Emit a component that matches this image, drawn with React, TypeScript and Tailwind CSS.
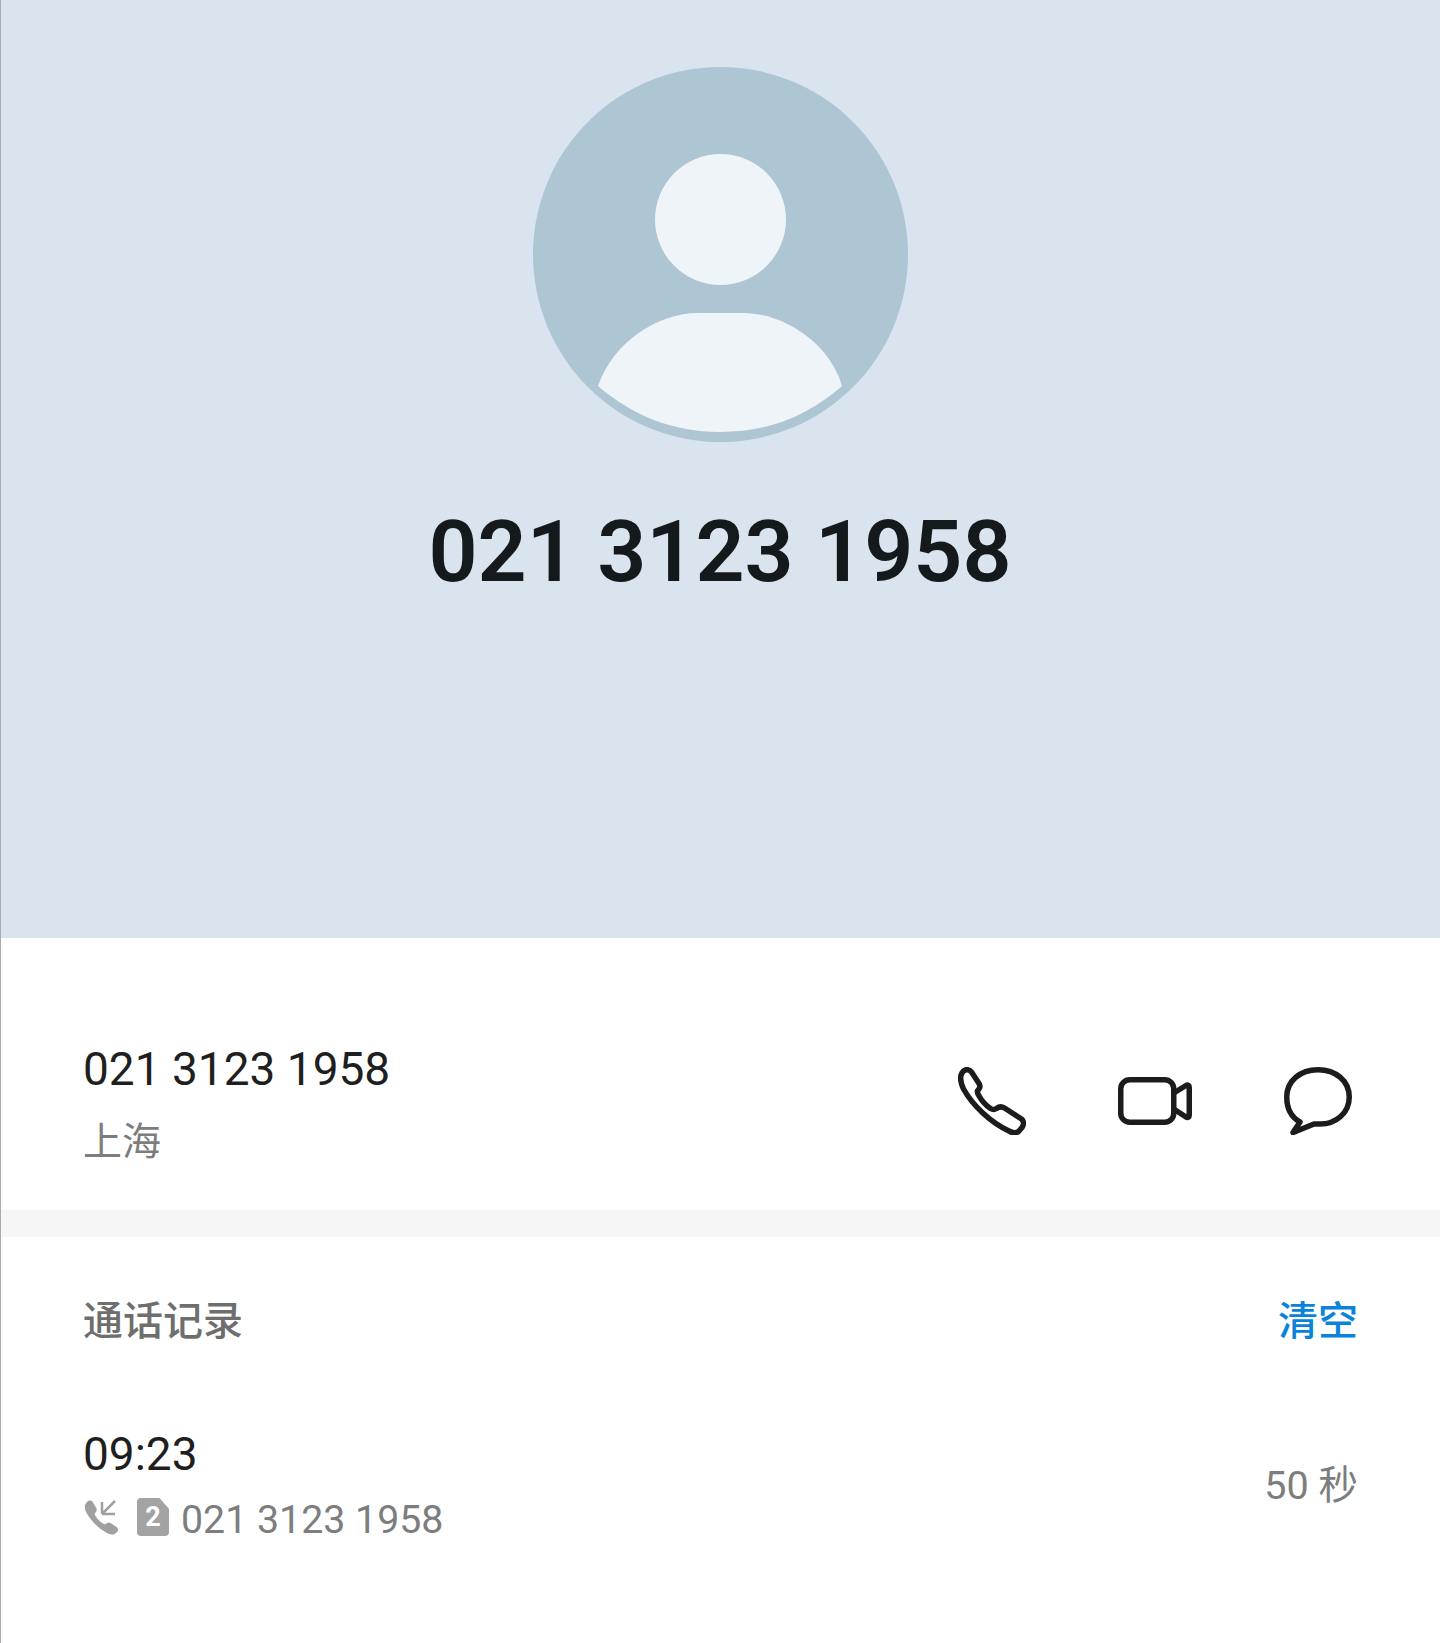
function PhoneIcon() {
  return (
    <svg viewBox="0 0 68 68" className="h-[68px] w-[68px] shrink-0" fill="none" stroke="#1c1c1c" strokeWidth="5.500" strokeLinejoin="round">
      <path d="M4 6C6.500 1.500 11 2 13.500 5L21 16.500C22.500 19 22 21 20.500 22.500C19 24 19 25.500 20.500 28C23.500 33.500 28 38.500 32.500 41.500C35 43 37 42.500 38.500 41.500C41 39.500 44 39.500 46.500 41L63.500 52C66 54 66 57.500 64 60.500L61 64C58.500 66.500 54.500 66 51 64C33 55.500 15 39 5.500 22C2.500 15.500 1.500 10 4 6Z" />
    </svg>
  );
}

function VideoIcon() {
  return (
    <svg viewBox="0 0 74 48" className="h-[48px] w-[74px] shrink-0" fill="none" stroke="#1c1c1c" strokeWidth="5.500" strokeLinejoin="round">
      <rect x="2.750" y="2.750" width="53" height="42.500" rx="9" />
      <path d="M55.750 16L68 8.500C70 7.500 71.250 8.500 71.250 10.500V38C71.250 40 70 41 68 40L55.750 32" />
    </svg>
  );
}

function ChatIcon() {
  return (
    <svg viewBox="0 0 68 68" className="h-[68px] w-[68px] shrink-0" fill="none" stroke="#1c1c1c" strokeWidth="5.500" strokeLinejoin="round">
      <path d="M34 2.750C52 2.750 65.250 14 65.250 30C65.250 46 52 57 36 57H30L9 65.500L16 55C7 50 2.750 41 2.750 30C2.750 14 16 2.750 34 2.750Z" />
    </svg>
  );
}

function IncomingIcon() {
  return (
    <svg viewBox="0 0 36 36" className="h-[36px] w-[36px] shrink-0" fill="#a0a0a0">
      <path d="M4 3C6 1 9 1 10 3.500L13.500 9.500C14 11 13.500 12.500 12.500 13.500C11.500 14.500 11.500 15.500 12.500 17C14.500 20 17 22.500 20 24.500C21.500 25.500 22.500 25.500 23.500 24.500C24.500 23.500 26 23 27.500 24L33.500 28C35.500 29.500 35.500 32 33.500 33.500L31.500 35C29.500 36 27 35.500 24 34C15 29 8 22 3 13C1 9 1.500 5.500 4 3Z" />
      <path d="M19 15V3M19 15H32M19 15L32 2" fill="none" stroke="#a0a0a0" strokeWidth="2.500" />
    </svg>
  );
}

function SimBadge() {
  return (
    <div className="flex h-[38px] w-[32px] shrink-0 items-center justify-center rounded-[4px] bg-[#a3a3a3] text-[27px] leading-none font-bold text-white [clip-path:polygon(0_0,70%_0,100%_28%,100%_100%,0_100%)]">
      2
    </div>
  );
}

export default function App() {
  return (
    <div className="h-[1643px] w-[1440px] overflow-hidden border-l border-[#a9acaf] bg-white font-['Roboto','Noto_Sans_CJK_SC',sans-serif]">
      <header className="flex h-[938px] flex-col items-center bg-[#d9e4ef] pt-[67px] pr-[1px]">
        <div className="relative h-[375px] w-[375px] overflow-hidden rounded-full bg-[#aec5d4]">
          <div className="mx-auto mt-[87px] h-[131px] w-[131px] rounded-full bg-[#eef4f8]" />
          <svg viewBox="0 0 375 375" className="absolute inset-0 h-[375px] w-[375px]" fill="#eef4f8">
            <path d="M65 319C80 275 125 246 165 246H210C250 246 296 275 309 319C275 349 235 365 187 365C140 365 100 349 65 319Z" />
          </svg>
        </div>
        <h1 className="mt-[58px] text-[86px] leading-[104px] font-semibold text-[#15191c]">021 3123 1958</h1>
      </header>

      <section className="flex h-[272px] items-center justify-between pt-[54px] pr-[88px] pl-[82px]">
        <div className="mt-[5px]">
          <div className="text-[46px] leading-[54px] text-[#1f1f1f]">021 3123 1958</div>
          <div className="mt-[23px] text-[39px] leading-[46px] text-[#7d7d7d]">上海</div>
        </div>
        <div className="flex items-center gap-[92px]">
          <PhoneIcon />
          <VideoIcon />
          <ChatIcon />
        </div>
      </section>

      <div className="h-[27px] bg-[#f6f6f6]" />

      <section className="pr-[82px] pl-[82px]">
        <div className="flex items-center justify-between pt-[62px]">
          <span className="text-[40px] leading-[46px] font-medium text-[#6e6e6e]">通话记录</span>
          <span className="text-[40px] leading-[46px] font-medium text-[#0a84db]">清空</span>
        </div>
        <div className="mt-[82px] flex items-center justify-between">
          <div>
            <div className="text-[46px] leading-[54px] text-[#1f1f1f]">09:23</div>
            <div className="mt-[15px] flex items-center">
              <div className="-mt-[6px] flex items-center gap-[18px]">
                <IncomingIcon />
                <SimBadge />
              </div>
              <span className="ml-[12px] text-[39.3px] leading-[48px] text-[#7d7d7d]">021 3123 1958</span>
            </div>
          </div>
          <span className="text-[39.5px] leading-[46px] text-[#7d7d7d]">50 秒</span>
        </div>
      </section>
    </div>
  );
}
